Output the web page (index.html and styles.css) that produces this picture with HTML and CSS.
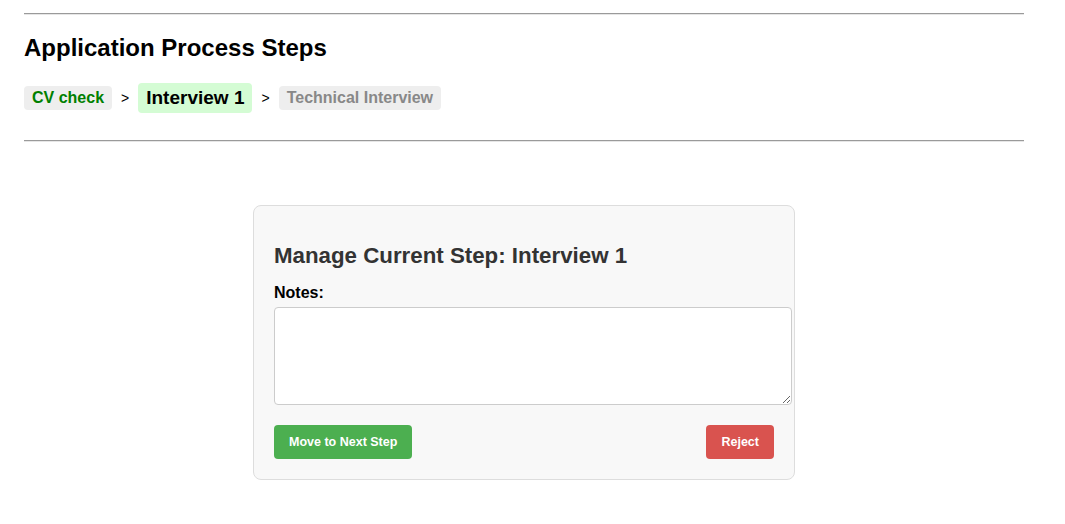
FILE: index.html
```html
<!DOCTYPE html>
<html lang="en">
<head>
  <meta charset="UTF-8" />
  <title>Application Process</title>
  <meta name="viewport" content="width=device-width, initial-scale=1.0" />
  <link rel="stylesheet" href="styles.css">
</head>
<body>
  <div class="page">
    <hr />

    <!-- Steps overview -->
    <h2 class="title">Application Process Steps</h2>
    <div class="steps">
      <span class="step done">CV check</span>
      <span class="sep">&gt;</span>
      <span class="step current">Interview 1</span>
      <span class="sep">&gt;</span>
      <span class="step pending">Technical Interview</span>
    </div>

    <hr />

    <!-- Manage step -->
    <div class="manage-card">
      <h3>Manage Current Step: Interview 1</h3>
      <form>
        <label for="notes">Notes:</label>
        <textarea id="notes" rows="5"></textarea>
        <div class="actions">
          <button type="button" class="next-btn">Move to Next Step</button>
          <button type="button" class="reject-btn">Reject</button>
        </div>
      </form>
    </div>
  </div>
</body>
</html>
```

FILE: styles.css
```css
body {
  font-family: "Liberation Sans", Arial, sans-serif;
  margin: 0;
  padding: 0;
  background: #fff;
  color: #000;
}

.page {
  width: 1000px;
  margin-left: 24px;
  padding-top: 13px;
}

hr {
  margin: 0;
  border: none;
  border-top: 1px solid #9a9a9a;
  border-bottom: 1px solid #e6e6e6;
}

.title {
  font-size: 24px;
  margin: 19px 0 21px;
}

.steps {
  display: flex;
  align-items: center;
  gap: 9px;
  margin-bottom: 27px;
}

.step {
  font-weight: bold;
  font-size: 16px;
  padding: 3px 8px;
  border-radius: 4px;
  background-color: #eee;
}

.step.done { color: green; }

.step.current {
  background-color: #d4fcd4;
  color: #000;
  font-size: 19px;
  padding: 4px 8px;
}

.step.pending { color: #888; }

.sep {
  font-size: 14px;
}

.manage-card {
  width: 500px;
  margin: 63px auto 0;
  padding: 20px;
  background-color: #f8f8f8;
  border: 1px solid #ddd;
  border-radius: 8px;
}

.manage-card h3 {
  font-size: 22.3px;
  color: #333;
  margin: 17px 0 15px;
}

label {
  display: block;
  font-weight: bold;
  font-size: 16px;
  margin-bottom: 5px;
}

textarea {
  display: block;
  box-sizing: border-box;
  width: 518px;
  height: 98px;
  padding: 8px;
  border: 1px solid #ccc;
  border-radius: 4px;
  background: #fff;
  font-family: inherit;
}

.actions {
  display: flex;
  justify-content: space-between;
  margin-top: 20px;
}

button {
  font-family: "Liberation Sans", Arial, sans-serif;
  font-size: 12.5px;
  font-weight: bold;
  color: #fff;
  border: none;
  border-radius: 4px;
  padding: 10px 15px;
  cursor: pointer;
}

.next-btn { background-color: #4caf50; }
.reject-btn { background-color: #d9534f; }
```
